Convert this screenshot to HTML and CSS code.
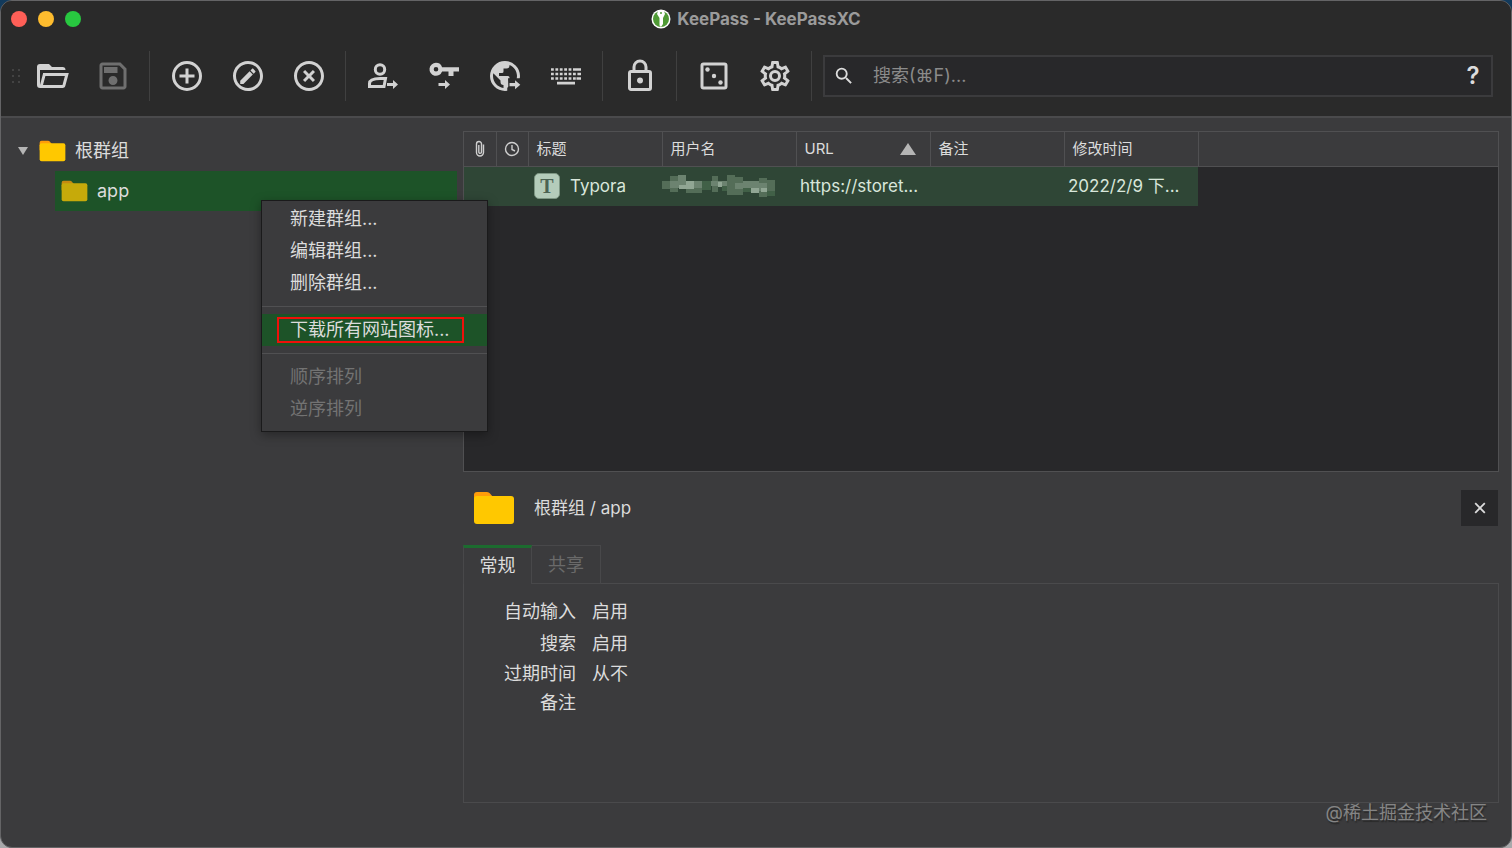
FILE: index.html
```html
<!DOCTYPE html>
<html lang="zh-CN">
<head>
    <meta charset="UTF-8">
    <meta name="viewport" content="width=device-width, initial-scale=1.0">
    <title>KeePass - KeePassXC</title>
    <link rel="stylesheet" href="styles.css">
</head>
<body>
    <!-- 共用的文件夹图标 -->
    <svg class="defs" width="0" height="0">
        <symbol id="folder" viewBox="0 0 42 34">
            <path fill="#ff9d0a" d="M4 1H14Q16 1 17 2.500L20 6H38V16H1V4Q1 1 4 1Z"/>
            <path fill="#ffc800" d="M4 5H38Q41 5 41 8V30Q41 33 38 33H4Q1 33 1 30V8Q1 5 4 5Z"/>
        </symbol>
    </svg>

    <div class="window">
        <header class="header">
            <div class="titlebar">
                <div class="lights">
                    <span class="light red"></span>
                    <span class="light yellow"></span>
                    <span class="light green"></span>
                </div>
                <div class="title">
                    <svg class="logo" viewBox="0 0 20 20">
                        <circle cx="10" cy="10" r="9.500" fill="#fff"/>
                        <circle cx="10" cy="10" r="8" fill="#4f9a35"/>
                        <path fill="#fff" d="M7 2H13L14 5L12 9V15L10 18L8.500 16.500V9L6 5Z"/>
                        <circle cx="10" cy="4" r="1" fill="#4f9a35"/>
                    </svg>
                    <h1>KeePass - KeePassXC</h1>
                </div>
            </div>

            <div class="toolbar">
                <svg class="grip" viewBox="0 0 10 16">
                    <path d="M1 1h2v2h-2zM7 1h2v2h-2zM1 7h2v2h-2zM7 7h2v2h-2zM1 13h2v2h-2zM7 13h2v2h-2z"/>
                </svg>
                <button class="tool" aria-label="打开数据库">
                    <svg viewBox="0 0 24 24"><path d="M6.100,10L4,18V8H21A2,2 0 0,0 19,6H12L10,4H4A2,2 0 0,0 2,6V18A2,2 0 0,0 4,20H19C19.900,20 20.700,19.400 20.900,18.500L23.200,10H6.100M19,18H6L7.600,12H20.600L19,18Z"/></svg>
                </button>
                <button class="tool" aria-label="保存数据库" disabled>
                    <svg viewBox="0 0 24 24"><path d="M17 3H5C3.890 3 3 3.900 3 5V19C3 20.100 3.890 21 5 21H19C20.100 21 21 20.100 21 19V7L17 3M19 19H5V5H16.170L19 7.830V19M12 12C10.340 12 9 13.340 9 15S10.340 18 12 18 15 16.660 15 15 13.660 12 12 12M6 6H15V10H6V6Z"/></svg>
                </button>
                <span class="sep"></span>
                <button class="tool" aria-label="新建条目">
                    <svg viewBox="0 0 24 24"><path d="M12,20C7.590,20 4,16.410 4,12C4,7.590 7.590,4 12,4C16.410,4 20,7.590 20,12C20,16.410 16.410,20 12,20M12,2A10,10 0 0,0 2,12A10,10 0 0,0 12,22A10,10 0 0,0 22,12A10,10 0 0,0 12,2M13,7H11V11H7V13H11V17H13V13H17V11H13V7Z"/></svg>
                </button>
                <button class="tool" aria-label="编辑条目">
                    <svg viewBox="0 0 24 24"><path d="M12,2C6.470,2 2,6.470 2,12C2,17.530 6.470,22 12,22C17.530,22 22,17.530 22,12C22,6.470 17.530,2 12,2M12,4C16.430,4 20,7.570 20,12C20,16.430 16.430,20 12,20C7.570,20 4,16.430 4,12C4,7.570 7.570,4 12,4M15.100,7.070C14.970,7.070 14.830,7.120 14.720,7.230L13.670,8.280L15.820,10.420L16.860,9.390C17.080,9.170 17.080,8.810 16.860,8.600L15.500,7.230C15.380,7.120 15.240,7.070 15.100,7.070M13.060,8.880L6.810,15.130V17.270H8.950L15.210,11.030L13.060,8.880Z"/></svg>
                </button>
                <button class="tool" aria-label="删除条目">
                    <svg viewBox="0 0 24 24"><path d="M12,20C7.590,20 4,16.410 4,12C4,7.590 7.590,4 12,4C16.410,4 20,7.590 20,12C20,16.410 16.410,20 12,20M12,2C6.470,2 2,6.470 2,12C2,17.530 6.470,22 12,22C17.530,22 22,17.530 22,12C22,6.470 17.530,2 12,2M14.590,8L12,10.590L9.410,8L8,9.410L10.590,12L8,14.590L9.410,16L12,13.410L14.590,16L16,14.590L13.410,12L16,9.410L14.590,8Z"/></svg>
                </button>
                <span class="sep"></span>
                <button class="tool" aria-label="复制用户名">
                    <svg viewBox="0 0 36 36">
                        <circle class="line" cx="15" cy="11.500" r="4.700"/>
                        <path class="line" d="M4.500 28.500V25.500C4.500 22 9 20.500 15 20.500H20.500L19 28.500Z"/>
                        <path d="M22 25H28V22L33 26.500L28 31V28H22Z"/>
                    </svg>
                </button>
                <button class="tool" aria-label="复制密码">
                    <svg viewBox="0 0 36 36">
                        <path fill-rule="evenodd" d="M10 4.800A6.500 6.500 0 0 1 16.100 9.200H33V13.500H27.500V18H22.500V13.500H16.100A6.500 6.500 0 1 1 10 4.800ZM10 9A2.300 2.300 0 1 0 10 13.600A2.300 2.300 0 1 0 10 9Z"/>
                        <path d="M12.500 25H19V22L24 26.500L19 31V28H12.500Z"/>
                    </svg>
                </button>
                <button class="tool" aria-label="复制 URL">
                    <svg viewBox="0 0 24 24">
                        <path d="M17.900,17.390C17.640,16.590 16.890,16 16,16H15V13A1,1 0 0,0 14,12H8V10H10A1,1 0 0,0 11,9V7H13A2,2 0 0,0 15,5V4.590C17.930,5.770 20,8.640 20,12C20,14.080 19.200,15.970 17.900,17.390M11,19.930C7.050,19.440 4,16.080 4,12C4,11.380 4.080,10.780 4.210,10.210L9,15V16A2,2 0 0,0 11,18M12,2A10,10 0 0,0 2,12A10,10 0 0,0 12,22A10,10 0 0,0 22,12A10,10 0 0,0 12,2Z"/>
                        <path class="cut" d="M14 13.500H24V24H13.500V20L14.200 19Z"/>
                        <path d="M15 16.700H18.700V14.800L22.200 17.800L18.700 20.800V18.800H15Z"/>
                    </svg>
                </button>
                <button class="tool" aria-label="自动输入">
                    <svg viewBox="0 0 36 36">
                        <path class="keys" d="M3 11.500H24"/>
                        <path class="keys" d="M3 16H28"/>
                        <path class="keys" d="M3 20.500H28"/>
                        <path d="M25 10.200H33V12.800H25ZM29.400 14.700H33V17.300H29.400ZM28.500 19.200H33V21.800H28.500ZM9 23.800H27V26.400H9Z"/>
                    </svg>
                </button>
                <span class="sep"></span>
                <button class="tool" aria-label="锁定数据库">
                    <svg viewBox="0 0 24 24"><path d="M12,17C10.890,17 10,16.100 10,15C10,13.890 10.890,13 12,13A2,2 0 0,1 14,15A2,2 0 0,1 12,17M18,20V10H6V20H18M18,8A2,2 0 0,1 20,10V20A2,2 0 0,1 18,22H6C4.890,22 4,21.100 4,20V10C4,8.890 4.890,8 6,8H7V6A5,5 0 0,1 12,1A5,5 0 0,1 17,6V8H18M12,3A3,3 0 0,0 9,6V8H15V6A3,3 0 0,0 12,3Z"/></svg>
                </button>
                <span class="sep"></span>
                <button class="tool" aria-label="密码生成器">
                    <svg viewBox="0 0 36 36">
                        <rect class="line" x="6" y="6" width="24" height="24" rx="1.500"/>
                        <circle cx="11.500" cy="11.500" r="2.200"/>
                        <circle cx="18" cy="18" r="2.200"/>
                        <circle cx="24.500" cy="24.500" r="2.200"/>
                    </svg>
                </button>
                <button class="tool" aria-label="设置">
                    <svg viewBox="0 0 24 24"><path d="M12,8A4,4 0 0,1 16,12A4,4 0 0,1 12,16A4,4 0 0,1 8,12A4,4 0 0,1 12,8M12,10A2,2 0 0,0 10,12A2,2 0 0,0 12,14A2,2 0 0,0 14,12A2,2 0 0,0 12,10M10,22C9.750,22 9.540,21.820 9.500,21.580L9.130,18.930C8.500,18.680 7.960,18.340 7.440,17.940L4.950,18.950C4.730,19.030 4.460,18.950 4.340,18.730L2.340,15.270C2.210,15.050 2.270,14.780 2.460,14.630L4.570,12.970L4.500,12L4.570,11L2.460,9.370C2.270,9.220 2.210,8.950 2.340,8.730L4.340,5.270C4.460,5.050 4.730,4.960 4.950,5.050L7.440,6.050C7.960,5.660 8.500,5.320 9.130,5.070L9.500,2.420C9.540,2.180 9.750,2 10,2H14C14.250,2 14.460,2.180 14.500,2.420L14.870,5.070C15.500,5.320 16.040,5.660 16.560,6.050L19.050,5.050C19.270,4.960 19.540,5.050 19.660,5.270L21.660,8.730C21.790,8.950 21.730,9.220 21.540,9.370L19.430,11L19.500,12L19.430,13L21.540,14.630C21.730,14.780 21.790,15.050 21.660,15.270L19.660,18.730C19.540,18.950 19.270,19.040 19.050,18.950L16.560,17.950C16.040,18.340 15.500,18.680 14.870,18.930L14.500,21.580C14.460,21.820 14.250,22 14,22H10M11.250,4L10.880,6.610C9.680,6.860 8.620,7.500 7.850,8.390L5.440,7.350L4.690,8.650L6.800,10.200C6.400,11.370 6.400,12.640 6.800,13.800L4.680,15.360L5.430,16.660L7.860,15.620C8.630,16.500 9.680,17.140 10.870,17.380L11.240,20H12.760L13.130,17.390C14.320,17.140 15.370,16.500 16.140,15.620L18.570,16.660L19.320,15.360L17.200,13.810C17.600,12.640 17.600,11.370 17.200,10.200L19.310,8.650L18.560,7.350L16.150,8.390C15.380,7.500 14.320,6.860 13.120,6.620L12.750,4H11.250Z"/></svg>
                </button>
                <span class="sep"></span>
                <div class="search">
                    <label for="search" aria-label="搜索">
                        <svg viewBox="0 0 24 24"><path d="M9.500,3A6.500,6.500 0 0,1 16,9.500C16,11.110 15.410,12.590 14.440,13.730L14.710,14H15.500L20.500,19L19,20.500L14,15.500V14.710L13.730,14.440C12.590,15.410 11.110,16 9.500,16A6.500,6.500 0 0,1 3,9.500A6.500,6.500 0 0,1 9.500,3M9.500,5C7,5 5,7 5,9.500C5,12 7,14 9.500,14C12,14 14,12 14,9.500C14,7 12,5 9.500,5Z"/></svg>
                    </label>
                    <input type="text" id="search" placeholder="搜索(⌘F)...">
                    <button class="help">?</button>
                </div>
            </div>
        </header>

        <main class="main">
            <nav class="sidebar">
                <div class="group root">
                    <svg class="arrow" viewBox="0 0 10 8"><path d="M0 0H10L5 8Z"/></svg>
                    <svg class="folder"><use href="#folder"/></svg>
                    <span>根群组</span>
                </div>
                <div class="group child">
                    <svg class="folder"><use href="#folder"/></svg>
                    <span>app</span>
                    <!-- 右键菜单 -->
                    <div class="menu">
                        <button>新建群组...</button>
                        <button>编辑群组...</button>
                        <button>删除群组...</button>
                        <hr>
                        <button class="active"><span class="mark">下载所有网站图标...</span></button>
                        <hr>
                        <button disabled>顺序排列</button>
                        <button disabled>逆序排列</button>
                    </div>
                </div>
            </nav>

            <div class="content">
                <div class="entries">
                    <table>
                        <colgroup>
                            <col class="col-icon">
                            <col class="col-icon">
                            <col class="col-text">
                            <col class="col-text">
                            <col class="col-text">
                            <col class="col-text">
                            <col class="col-text">
                            <col>
                        </colgroup>
                        <thead>
                            <tr>
                                <th class="icon" aria-label="附件">
                                    <svg viewBox="0 0 18 18"><path d="M12.500 4.500V12.500A3.500 3.500 0 0 1 5.500 12.500V4A2.500 2.500 0 0 1 10.500 4V12A1.300 1.300 0 0 1 7.800 12V5"/></svg>
                                </th>
                                <th class="icon" aria-label="过期">
                                    <svg viewBox="0 0 18 18"><circle cx="9" cy="9" r="6.500"/><path d="M9 5V9.500L12 11"/></svg>
                                </th>
                                <th>标题</th>
                                <th>用户名</th>
                                <th>
                                    <div class="sorted">URL <svg viewBox="0 0 16 12"><path d="M0 12L8 0L16 12Z"/></svg></div>
                                </th>
                                <th>备注</th>
                                <th>修改时间</th>
                                <th class="rest"></th>
                            </tr>
                        </thead>
                        <tbody>
                            <tr>
                                <td></td>
                                <td></td>
                                <td class="name"><div><span class="favicon">T</span>Typora</div></td>
                                <td class="user">
                                    <svg viewBox="0 0 114 24" shape-rendering="crispEdges">
                                        <path fill="#546d58" d="M0 7h8v8h-8zM8 2h8v16h-8zM24 14h16v5h-16zM50 2h6v16h-6zM65 1h8v20h-8zM73 3h8v18h-8zM97 4h8v19h-8zM105 6h8v16h-8z"/>
                                        <path fill="#6c8370" d="M8 7h16v7h-16zM16 1h8v6h-8zM32 7h16v7h-16zM48 7h17v5h-17zM81 7h16v7h-16zM97 9h8v8h-8zM73 9h8v6h-8z"/>
                                        <path fill="#91a694" d="M24 7h8v8h-8zM56 8h4v5h-4zM89 14h8v5h-8zM99 14h6v4h-6zM17 11h7v4h-7z"/>
                                        <path fill="#416047" d="M40 7h9v9h-9zM60 12h5v5h-5zM81 14h8v4h-8zM105 17h8v5h-8z"/>
                                    </svg>
                                </td>
                                <td>https://storet...</td>
                                <td></td>
                                <td>2022/2/9 下...</td>
                                <td class="rest"></td>
                            </tr>
                        </tbody>
                    </table>
                </div>

                <section class="detail">
                    <div class="detail-head">
                        <svg class="folder-big"><use href="#folder"/></svg>
                        <h2>根群组 / app</h2>
                        <button class="close" aria-label="关闭">
                            <svg viewBox="0 0 10 10"><path d="M1 1L9 9M9 1L1 9"/></svg>
                        </button>
                    </div>
                    <div class="tabs">
                        <button class="tab current">常规</button>
                        <button class="tab" disabled>共享</button>
                    </div>
                    <div class="pane">
                        <dl>
                            <dt>自动输入</dt><dd>启用</dd>
                            <dt>搜索</dt><dd>启用</dd>
                            <dt>过期时间</dt><dd>从不</dd>
                            <dt>备注</dt><dd></dd>
                        </dl>
                    </div>
                </section>
            </div>
        </main>

        <footer class="footer">@稀土掘金技术社区</footer>
    </div>
</body>
</html>
```

FILE: styles.css
```css
* {
    box-sizing: border-box;
    margin: 0;
    padding: 0;
}
body {
    background: linear-gradient(#123a5c, #a9a9ab);
    color: #dcdcdc;
    font-family: Inter, "Noto Sans CJK SC", sans-serif;
    font-size: 18px;
    line-height: 24px;
}
button, input {
    font: inherit;
    color: inherit;
    background: none;
    border: none;
}
.defs {
    position: absolute;
}
.window {
    display: flex;
    flex-direction: column;
    min-height: 100vh;
    background-color: #3b3b3d;
    border: 1px solid #646466;
    border-radius: 12px;
    overflow: hidden;
}

/* 标题栏 */
.header {
    background-color: #2a2a2a;
    border-bottom: 2px solid #4a4a4c;
}
.titlebar {
    display: grid;
    grid-template-columns: 1fr auto 1fr;
    align-items: center;
    height: 35px;
    padding: 0 10px;
}
.lights {
    display: flex;
    gap: 11px;
}
.light {
    width: 16px;
    height: 16px;
    border-radius: 50%;
}
.red {
    background-color: #ff5f57;
}
.yellow {
    background-color: #febc2e;
}
.green {
    background-color: #28c840;
}
.title {
    display: flex;
    align-items: center;
    gap: 6px;
    color: #9b9b9b;
}
.title h1 {
    font-size: 17px;
    font-weight: 700;
}
.logo {
    width: 20px;
    height: 20px;
}

/* 工具栏 */
.toolbar {
    display: flex;
    align-items: center;
    height: 80px;
    padding: 0 18px 0 10px;
}
.grip {
    width: 10px;
    height: 16px;
    fill: #434343;
}
.tool {
    flex: none;
    display: flex;
    align-items: center;
    justify-content: center;
    width: 61px;
    height: 61px;
}
.tool svg {
    width: 36px;
    height: 36px;
    fill: #d2d2d2;
}
.tool:disabled svg {
    fill: #6f6f6f;
}
.tool .line {
    fill: none;
    stroke: #d2d2d2;
    stroke-width: 3;
}
.tool .keys {
    stroke: #d2d2d2;
    stroke-width: 2.6;
    stroke-dasharray: 2.8 1.6;
}
.tool .cut {
    fill: #2a2a2a;
}
.sep {
    width: 1px;
    height: 50px;
    margin: 0 6px;
    background-color: #404040;
}
.search {
    flex: 1;
    display: flex;
    align-items: center;
    height: 42px;
    margin-left: 5px;
    background-color: #28282a;
    border: 2px solid #3b3b3d;
}
.search label {
    display: flex;
    padding: 0 18px 0 8px;
}
.search label svg {
    width: 22px;
    height: 22px;
    fill: #dcdcdc;
}
.search input {
    flex: 1;
    min-width: 0;
    outline: none;
}
.search input::placeholder {
    color: #8b8b8b;
}
.help {
    width: 36px;
    font-size: 24px;
    font-weight: 600;
}

/* 群组树 */
.main {
    flex: 1;
    display: flex;
    gap: 6px;
    padding: 13px 12px 0 0;
}
.sidebar {
    flex: none;
    width: 456px;
}
.group {
    display: flex;
    align-items: center;
    height: 40px;
}
.root {
    padding-left: 16px;
}
.child {
    position: relative;
    margin-left: 54px;
    padding-left: 6px;
    background-color: #1d5328;
}
.arrow {
    width: 12px;
    height: 8px;
    margin-right: 10px;
    fill: #b5b5b5;
}
.folder {
    width: 27px;
    height: 22px;
    margin-right: 9px;
}
.child .folder {
    opacity: 0.75;
}

/* 右键菜单 */
.menu {
    position: absolute;
    top: 29px;
    left: 206px;
    z-index: 1;
    width: 227px;
    padding: 2px 0 6px;
    background-color: #3b3b3d;
    border: 1px solid #1a1a1b;
    box-shadow: 0 3px 10px rgba(0, 0, 0, 0.35);
}
.menu button {
    display: block;
    width: 100%;
    height: 32px;
    padding-left: 28px;
    line-height: 32px;
    text-align: left;
}
.menu button:disabled {
    color: #737373;
}
.menu hr {
    height: 1px;
    margin: 7px 0;
    background-color: #505052;
    border: none;
}
.menu .active {
    padding-left: 15px;
    background-color: #1d5328;
}
.mark {
    display: inline-block;
    padding: 0 12px 0 11px;
    border: 2px solid #f0100a;
    line-height: 22px;
}

/* 条目列表 */
.content {
    flex: 1;
    display: flex;
    flex-direction: column;
    min-width: 0;
}
.entries {
    flex: 1;
    background-color: #28282a;
    border: 1px solid #505052;
}
table {
    width: 100%;
    table-layout: fixed;
    border-collapse: collapse;
}
.col-icon {
    width: 32px;
}
.col-text {
    width: 134px;
}
th {
    height: 34px;
    padding: 0 8px;
    background-color: #3b3b3d;
    border-right: 1px solid #505052;
    border-bottom: 1px solid #505052;
    font-size: 15px;
    font-weight: 400;
    text-align: left;
}
th.icon {
    padding: 0;
}
th.icon svg {
    display: block;
    width: 18px;
    height: 18px;
    margin: 0 auto;
    fill: none;
    stroke: #cfcfcf;
    stroke-width: 1.4;
}
th.rest {
    border-right: none;
}
td {
    height: 40px;
    padding: 0 4px;
    background-color: #2f4636;
    color: #d9e6db;
    font-size: 17px;
    white-space: nowrap;
}
td.rest {
    background-color: transparent;
}
.sorted {
    display: flex;
    align-items: center;
    justify-content: space-between;
    padding-right: 6px;
}
.sorted svg {
    width: 16px;
    height: 12px;
    fill: #b5b5b5;
}
.name {
    padding: 0 6px;
}
.name div {
    display: flex;
    align-items: center;
    gap: 10px;
}
.favicon {
    width: 26px;
    height: 26px;
    background-color: #b4ccba;
    border: 1px solid #7d9683;
    border-radius: 5px;
    color: #4c6353;
    font: bold 20px/24px "Liberation Serif", serif;
    text-align: center;
}
.user {
    padding: 0;
}
.user svg {
    display: block;
    width: 114px;
    height: 24px;
}

/* 群组详情 */
.detail-head {
    display: flex;
    align-items: center;
    height: 73px;
    padding: 0 1px 2px 10px;
}
.folder-big {
    width: 42px;
    height: 34px;
    margin-right: 19px;
}
.detail-head h2 {
    font-size: 17px;
    font-weight: 400;
}
.close {
    width: 37px;
    height: 36px;
    margin-left: auto;
    background-color: #28282a;
}
.close svg {
    width: 12px;
    height: 12px;
    stroke: #dcdcdc;
    stroke-width: 1.5;
}
.tabs {
    display: flex;
    margin-bottom: -1px;
}
.tab {
    position: relative;
    width: 69px;
    height: 39px;
    border: 1px solid #48484a;
    border-left: none;
}
.tab:disabled {
    color: #6a6a6a;
}
.tab.current {
    background-color: #3b3b3d;
    border-left: 1px solid #48484a;
    border-top: 3px solid #1c6b2f;
    border-bottom: none;
}
.pane {
    min-height: 220px;
    padding-top: 12px;
    border: 1px solid #4a4a4c;
}
dl {
    display: grid;
    grid-template-columns: 112px 1fr;
    grid-template-rows: 32px 32px 28px 30px;
    column-gap: 16px;
    align-items: center;
}
dt {
    text-align: right;
}

.footer {
    height: 44px;
    padding: 0 24px 0 0;
    line-height: 20px;
    color: #858585;
    text-align: right;
    text-shadow: 1px 2px 1px #2a2a2a;
}
```
